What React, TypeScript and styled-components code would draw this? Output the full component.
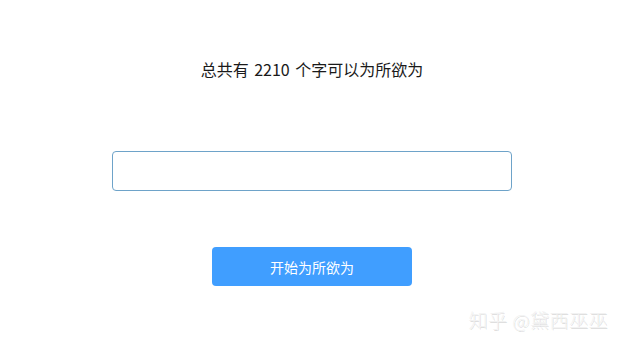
import React from 'react'
import styled, { createGlobalStyle } from 'styled-components'

const GlobalStyle = createGlobalStyle`
    html, body {
        margin: 0;
        padding: 0;
        background: #fff;
    }
    body {
        font-family: "Microsoft YaHei", "Noto Sans CJK SC", "Noto Sans", sans-serif;
    }
`

const Page = styled.div({
    position: 'relative',
    width: 619,
    height: 345,
    display: 'flex',
    flexDirection: 'column',
    alignItems: 'center',
    paddingLeft: 5,
    boxSizing: 'border-box',
    overflow: 'hidden'
})

const Title = styled.div({
    marginTop: 58,
    fontSize: 16,
    lineHeight: '22px',
    color: '#1a1a1a',
    wordSpacing: 2
})

const TextInput = styled.input({
    marginTop: 71,
    width: 400,
    height: 40,
    boxSizing: 'border-box',
    border: '1px solid #6ea3c9',
    borderRadius: 4,
    outline: 'none',
    padding: '0 10px',
    fontSize: 14,
    background: '#fff'
})

const StartButton = styled.button({
    marginTop: 56,
    width: 200,
    height: 39,
    border: 'none',
    borderRadius: 4,
    backgroundColor: '#409eff',
    color: '#fff',
    fontSize: 14,
    fontFamily: 'inherit',
    cursor: 'pointer',
    ':hover': {
        backgroundColor: '#66b1ff'
    }
})

const Watermark = styled.div({
    position: 'absolute',
    right: 11,
    bottom: 13,
    fontSize: 19,
    fontWeight: 300,
    lineHeight: '24px',
    color: '#f2f2f2',
    letterSpacing: 0.5,
    textShadow: '1px 1px 0 rgba(0,0,0,.13), -1px -1px 0 rgba(255,255,255,.6)',
    pointerEvents: 'none'
})

const App: React.FC = () => {
    return (
        <Page>
            <GlobalStyle />
            <Title>总共有 2210 个字可以为所欲为</Title>
            <TextInput type='text' />
            <StartButton>开始为所欲为</StartButton>
            <Watermark>知乎 @黛西巫巫</Watermark>
        </Page>
    )
}

export default App
